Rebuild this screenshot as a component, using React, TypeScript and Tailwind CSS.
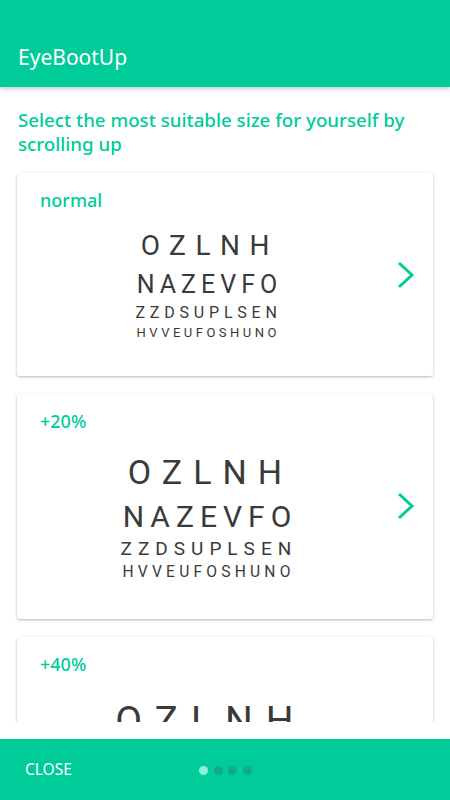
import React from 'react';

const ui = "font-['Noto_Sans',sans-serif]";
const chart = "font-['Roboto',sans-serif] text-[#3a3a3a] leading-none whitespace-nowrap";

const cards = [
  {
    label: 'normal',
    body: 'pb-[37px]',
    rows: [
      { text: 'OZLNH', cls: 'mt-[20px] text-[28px] tracking-[9.5px]' },
      { text: 'NAZEVFO', cls: 'mt-[12px] text-[25px] tracking-[5px]' },
      { text: 'ZZDSUPLSEN', cls: 'mt-[8px] text-[16px] tracking-[4.8px]' },
      { text: 'HVVEUFOSHUNO', cls: 'mt-[5px] text-[13px] tracking-[3.5px]' },
    ],
  },
  {
    label: '+20%',
    body: 'pb-[38px]',
    rows: [
      { text: 'OZLNH', cls: 'mt-[22px] text-[34px] tracking-[11px]' },
      { text: 'NAZEVFO', cls: 'mt-[13px] text-[30px] tracking-[6px]' },
      { text: 'ZZDSUPLSEN', cls: 'mt-[7px] text-[19px] tracking-[6px]' },
      { text: 'HVVEUFOSHUNO', cls: 'mt-[7px] text-[15.6px] tracking-[4.2px]' },
    ],
  },
  {
    label: '+40%',
    body: 'pb-[40px]',
    rows: [
      { text: 'OZLNH', cls: 'mt-[26px] text-[39px] tracking-[13px]' },
      { text: 'NAZEVFO', cls: 'mt-[16px] text-[35px] tracking-[7px]' },
      { text: 'ZZDSUPLSEN', cls: 'mt-[9px] text-[22px] tracking-[7px]' },
      { text: 'HVVEUFOSHUNO', cls: 'mt-[8px] text-[18px] tracking-[5px]' },
    ],
  },
];

const Chevron = () => (
  <svg width="18" height="28" viewBox="0 0 18 28" className="shrink-0 mr-[18px]">
    <polyline points="2,2 15,14 2,26" fill="none" stroke="#00CC99" strokeWidth="3" />
  </svg>
);

export default function App() {
  return (
    <div className={`w-[450px] h-[800px] bg-white flex flex-col overflow-hidden ${ui}`}>
      {/* Toolbar */}
      <div className="h-[87px] shrink-0 bg-[#00CC99] flex items-end px-[18px] pb-[15px] shadow-[0_2px_4px_rgba(0,0,0,0.22)] relative z-10">
        <span className="text-white text-[21px] leading-[30px]">EyeBootUp</span>
      </div>

      {/* Scroll content */}
      <div className="h-[635px] overflow-hidden shrink-0">
        <p className="text-[#00CC99] text-[18.7px] leading-[24px] px-[18px] pt-[21px] font-medium">
          Select the most suitable size for yourself by scrolling up
        </p>

        <div className="flex flex-col gap-[18px] px-[17px] pt-[17px]">
          {cards.map((card) => (
            <div
              key={card.label}
              className="bg-white rounded-[3px] shadow-[0_1px_3px_rgba(0,0,0,0.28)] flex items-center"
            >
              <div className={`flex-1 flex flex-col pt-[15px] ${card.body}`}>
                <div className="text-[#00CC99] text-[18px] leading-[24px] pl-[23px] font-medium">
                  {card.label}
                </div>
                {card.rows.map((row) => (
                  <div key={row.text} className={`${chart} ${row.cls} text-center mr-[-0.2em]`}>
                    {row.text}
                  </div>
                ))}
              </div>
              <Chevron />
            </div>
          ))}
        </div>
      </div>

      <div className="h-[17px] shrink-0 bg-white" />

      {/* Bottom bar */}
      <div className="flex-1 bg-[#00CC99] relative flex items-center px-[25px]">
        <span className="text-white text-[15.5px] leading-none">CLOSE</span>
        <div className="absolute left-[199px] top-[27px] flex gap-[5.5px]">
          <span className="w-[9px] h-[9px] rounded-full bg-[#8ff0dc]" />
          <span className="w-[9px] h-[9px] rounded-full bg-[#17a78e]" />
          <span className="w-[9px] h-[9px] rounded-full bg-[#17a78e]" />
          <span className="w-[9px] h-[9px] rounded-full bg-[#17a78e]" />
        </div>
      </div>
    </div>
  );
}
